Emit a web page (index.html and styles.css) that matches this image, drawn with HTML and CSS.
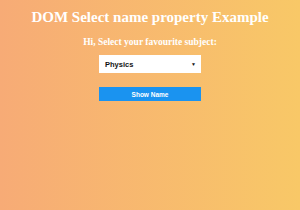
FILE: index.html
```html
<!DOCTYPE html>
<html lang="en">
<head>
  <meta charset="UTF-8">
  <meta name="viewport" content="width=device-width, initial-scale=1.0">
  <title>DOM Select name property</title>
  <link rel="stylesheet" href="styles.css">
</head>
<body>
  <h1 class="title">DOM Select name property Example</h1>
  <h3 class="subtitle">Hi, Select your favourite subject:</h3>
  <div class="picker">
    <span class="picker-value">Physics</span>
    <span class="picker-arrow">&#9660;</span>
  </div>
  <button class="show-btn">Show Name</button>
</body>
</html>
```

FILE: styles.css
```css
html, body {
  height: 100%;
}
body {
  margin: 0;
  font-family: "Liberation Serif", "Times New Roman", serif;
  background: linear-gradient(to right, #f7ab76, #f8c867);
  color: #fff;
  display: flex;
  flex-direction: column;
  align-items: center;
}
.title {
  margin: 8px 0 0;
  font-size: 15px;
  line-height: 18px;
  font-weight: bold;
}
.subtitle {
  margin: 10px 0 0;
  font-size: 9.5px;
  line-height: 12px;
  font-weight: bold;
}
.picker {
  margin-top: 7px;
  width: 102px;
  height: 18px;
  box-sizing: border-box;
  background: #fff;
  display: flex;
  align-items: center;
  justify-content: space-between;
  padding: 0 5px 0 6px;
  color: #111;
  font-family: "Liberation Sans", Arial, sans-serif;
  font-size: 7.5px;
  font-weight: bold;
}
.picker-arrow {
  font-size: 5px;
}
.show-btn {
  margin-top: 14px;
  width: 102px;
  height: 14px;
  border: none;
  padding: 0;
  background: #1a93f0;
  color: #fff;
  font-family: "Liberation Sans", Arial, sans-serif;
  font-size: 6.5px;
  font-weight: bold;
}
```
